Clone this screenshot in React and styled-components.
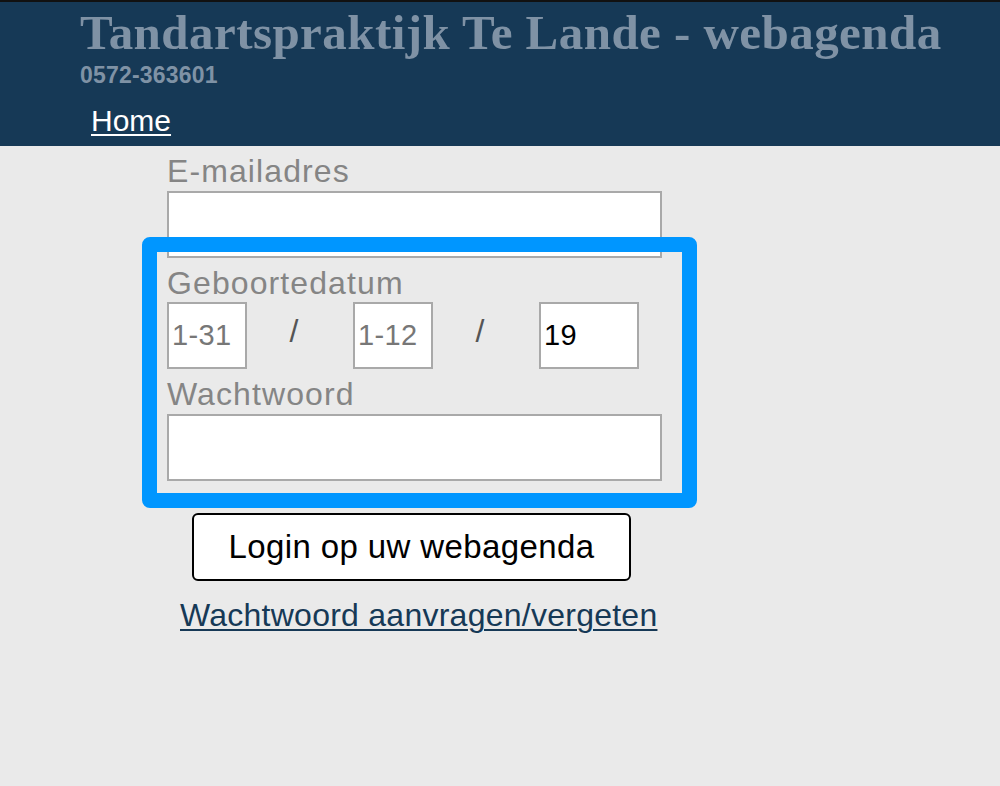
import React from 'react'
import styled, { createGlobalStyle } from 'styled-components'

const NAVY = '#163956'
const HIGHLIGHT = '#0096FF'

const GlobalStyle = createGlobalStyle`
  html, body {
    margin: 0;
    padding: 0;
    background: #EAEAEA;
  }
  body {
    font-family: "Liberation Sans", Arial, sans-serif;
  }
`

const DATE_PARTS = [
  { placeholder: '1-31', width: 80 },
  { placeholder: '1-12', width: 80 },
  { value: '19', width: 100 }
]

const DateRow = () => (
  <DateWrapper>
    {DATE_PARTS.map((part, i) => (
      <React.Fragment key={i}>
        {i > 0 && <Slash>/</Slash>}
        <SmallInput
          $width={part.width}
          placeholder={part.placeholder}
          defaultValue={part.value}
        />
      </React.Fragment>
    ))}
  </DateWrapper>
)

const App = () => (
  <Page>
    <GlobalStyle />
    <Header>
      <Title>Tandartspraktijk Te Lande - webagenda</Title>
      <Phone>0572-363601</Phone>
      <Nav>
        <NavLink href="#">Home</NavLink>
      </Nav>
    </Header>
    <Form>
      <Label>E-mailadres</Label>
      <TextInput type="text" />
      <Label>Geboortedatum</Label>
      <DateRow />
      <Label>Wachtwoord</Label>
      <TextInput type="password" />
      <LoginButton type="button">Login op uw webagenda</LoginButton>
      <ForgotLink href="#">Wachtwoord aanvragen/vergeten</ForgotLink>
    </Form>
    <Highlight />
  </Page>
)

const Page = styled.div`
  position: relative;
  min-height: 786px;
`

const Header = styled.header`
  background: ${NAVY};
  border-top: 2px solid #111;
  padding: 6px 0 11px 80px;
  display: flex;
  flex-direction: column;
  align-items: flex-start;
`

const Title = styled.h1`
  margin: 0;
  font-family: "Liberation Serif", "Times New Roman", serif;
  font-weight: bold;
  font-size: 49px;
  line-height: 49px;
  letter-spacing: 0.45px;
  color: #7F92A5;
  white-space: nowrap;
`

const Phone = styled.div`
  margin-top: 7px;
  font-weight: bold;
  font-size: 23px;
  line-height: 23px;
  letter-spacing: 0.2px;
  color: #7F92A5;
`

const Nav = styled.nav`
  margin: 19px 0 0 11px;
`

const NavLink = styled.a`
  font-size: 30px;
  line-height: 29px;
  color: #fff;
  text-decoration: underline;
  text-underline-offset: 3px;
  text-decoration-thickness: 2px;
`

const Form = styled.div`
  width: 495px;
  margin-left: 167px;
  padding-top: 7px;
  display: flex;
  flex-direction: column;
`

const Label = styled.label`
  font-size: 32px;
  line-height: 37px;
  letter-spacing: 1.1px;
  color: #858585;
  margin-bottom: 1px;

  input + &, div + & {
    margin-top: 7px;
  }
`

const TextInput = styled.input`
  box-sizing: border-box;
  width: 495px;
  height: 67px;
  border: 2px solid #A9A9A9;
  background: #fff;
  padding: 0 3px;
  font-family: "Liberation Sans", Arial, sans-serif;
  font-size: 29px;
  outline: none;
`

const DateWrapper = styled.div`
  display: flex;
  align-items: center;
  margin-top: -1px;
`

const SmallInput = styled(TextInput)`
  width: ${p => p.$width}px;
  letter-spacing: 0.4px;

  &::placeholder {
    color: #777;
  }
`

const Slash = styled.span`
  width: 106px;
  box-sizing: border-box;
  padding: 0 12px 9px 0;
  text-align: center;
  font-size: 32px;
  color: #555;
`

const LoginButton = styled.button`
  align-self: flex-start;
  margin: 32px 0 0 25px;
  box-sizing: border-box;
  width: 439px;
  height: 68px;
  border: 2px solid #000;
  border-radius: 6px;
  background: #fff;
  color: #000;
  font-family: "Liberation Sans", Arial, sans-serif;
  font-size: 33px;
  letter-spacing: 0.4px;
  padding: 0;
`

const ForgotLink = styled.a`
  align-self: flex-start;
  margin: 16px 0 0 13px;
  font-size: 32px;
  letter-spacing: 0.25px;
  color: ${NAVY};
  text-decoration: underline;
  text-underline-offset: 3px;
  text-decoration-thickness: 2px;
`

const Highlight = styled.div`
  position: absolute;
  left: 142px;
  top: 237px;
  width: 555px;
  height: 271px;
  box-sizing: border-box;
  border: 15px solid ${HIGHLIGHT};
  border-radius: 8px;
  pointer-events: none;
`

export default App
